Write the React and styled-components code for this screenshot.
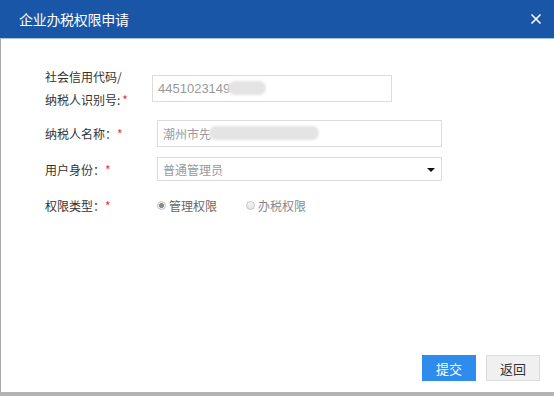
import styled, { createGlobalStyle } from "styled-components";

const GlobalStyle = createGlobalStyle`
  html, body {
    margin: 0;
    padding: 0;
    background: #fff;
  }
  body {
    font-family: "Liberation Sans", "Noto Sans CJK SC", sans-serif;
  }
`;

const Dialog = styled.div`
  width: 554px;
  height: 396px;
  display: flex;
  flex-direction: column;
  overflow: hidden;
`;

const Header = styled.div`
  height: 38px;
  flex: none;
  display: flex;
  align-items: center;
  justify-content: space-between;
  padding: 0 12px 0 19px;
  background: #1a56a8;
  border-bottom: 1px solid #a9c3e6;
  color: #fff;
`;

const Title = styled.span`
  font-size: 14px;
  font-family: "Noto Sans CJK SC", sans-serif;
  letter-spacing: -0.3px;
`;

const Close = styled.button`
  border: none;
  background: none;
  padding: 0;
  width: 12px;
  height: 12px;
  display: flex;
  cursor: pointer;
`;

const Body = styled.div`
  flex: 1;
  display: flex;
  flex-direction: column;
  border-left: 1px solid #a8a8a8;
`;

const Form = styled.div`
  flex: 1;
  display: flex;
  flex-direction: column;
  padding: 26px 0 0 44px;
`;

const Row = styled.div`
  display: flex;
  align-items: center;
  height: ${(p) => p.$h || 36}px;
  margin-bottom: ${(p) => p.$mb || 0}px;
`;

const Label = styled.div`
  width: ${(p) => p.$w || 112}px;
  flex: none;
  font-size: 12px;
  line-height: 23px;
  color: #333;
  font-family: "Noto Sans CJK SC", sans-serif;
`;

const Star = styled.span`
  color: #e4393c;
  margin-left: ${(p) => p.$ml ?? 2}px;
`;

const Field = styled.div`
  width: ${(p) => p.$w}px;
  height: ${(p) => p.$h || 27}px;
  box-sizing: border-box;
  border: 1px solid #dcdcdc;
  display: flex;
  align-items: center;
  padding: 0 5px;
  color: #999;
  font-size: ${(p) => p.$fs || 12}px;
  font-family: "Liberation Sans", "Noto Sans CJK SC", sans-serif;
  position: relative;
`;

const Blur = styled.span`
  display: inline-block;
  width: ${(p) => p.$w}px;
  height: 14px;
  background: #e4e4e4;
  border-radius: 7px;
  filter: blur(1px);
  margin-left: -2px;
`;

const Arrow = styled.span`
  position: absolute;
  right: 6px;
  top: 10px;
  width: 0;
  height: 0;
  border-left: 4px solid transparent;
  border-right: 4px solid transparent;
  border-top: 4px solid #111;
`;

const RadioGroup = styled.div`
  display: flex;
  align-items: center;
  gap: 29px;
`;

const Radio = styled.label`
  display: flex;
  align-items: center;
  gap: 3px;
  font-size: 12px;
  color: ${(p) => (p.$on ? "#666" : "#888")};
  font-family: "Noto Sans CJK SC", sans-serif;
`;

const Dot = styled.span`
  width: 9px;
  height: 9px;
  box-sizing: border-box;
  border-radius: 50%;
  border: 1px solid #c4c4c4;
  background: ${(p) =>
    p.$on
      ? "radial-gradient(circle, #8a8a8a 0 2.2px, #f2f2f2 2.6px)"
      : "linear-gradient(#f6f6f6, #e2e2e2)"};
`;

const Footer = styled.div`
  display: flex;
  justify-content: flex-end;
  gap: 10px;
  padding: 0 14px 11px 0;
`;

const Button = styled.button`
  width: 54px;
  height: 26px;
  font-size: 13px;
  font-family: "Noto Sans CJK SC", sans-serif;
  border: 1px solid ${(p) => (p.$primary ? "#2d8cec" : "#dcdcdc")};
  background: ${(p) => (p.$primary ? "#2d8cec" : "#f0f0f0")};
  color: ${(p) => (p.$primary ? "#fff" : "#333")};
  padding: 0;
  cursor: pointer;
`;

const BottomBar = styled.div`
  height: 4px;
  flex: none;
  background: #b3b3b3;
`;

export default function App() {
  return (
    <>
      <GlobalStyle />
      <Dialog>
        <Header>
          <Title>企业办税权限申请</Title>
          <Close>
            <svg width="12" height="12" viewBox="0 0 12 12">
              <path d="M1.5 1.5 L10.5 10.5 M10.5 1.5 L1.5 10.5" stroke="#fff" strokeWidth="1.6" />
            </svg>
          </Close>
        </Header>
        <Body>
          <Form>
            <Row $h={46} $mb={4}>
              <Label $w={107}>
                社会信用代码/
                <br />
                纳税人识别号:<Star>*</Star>
              </Label>
              <Field $w={240} $fs={13}>
                4451023149
                <Blur $w={38} />
              </Field>
            </Row>
            <Row>
              <Label>
                纳税人名称：<Star $ml={0}>*</Star>
              </Label>
              <Field $w={285}>
                潮州市先
                <Blur $w={110} />
              </Field>
            </Row>
            <Row>
              <Label>
                用户身份：<Star $ml={0}>*</Star>
              </Label>
              <Field $w={285} $h={24}>
                普通管理员
                <Arrow />
              </Field>
            </Row>
            <Row>
              <Label>
                权限类型：<Star $ml={0}>*</Star>
              </Label>
              <RadioGroup>
                <Radio $on>
                  <Dot $on />
                  管理权限
                </Radio>
                <Radio>
                  <Dot />
                  办税权限
                </Radio>
              </RadioGroup>
            </Row>
          </Form>
          <Footer>
            <Button $primary>提交</Button>
            <Button>返回</Button>
          </Footer>
        </Body>
        <BottomBar />
      </Dialog>
    </>
  );
}
